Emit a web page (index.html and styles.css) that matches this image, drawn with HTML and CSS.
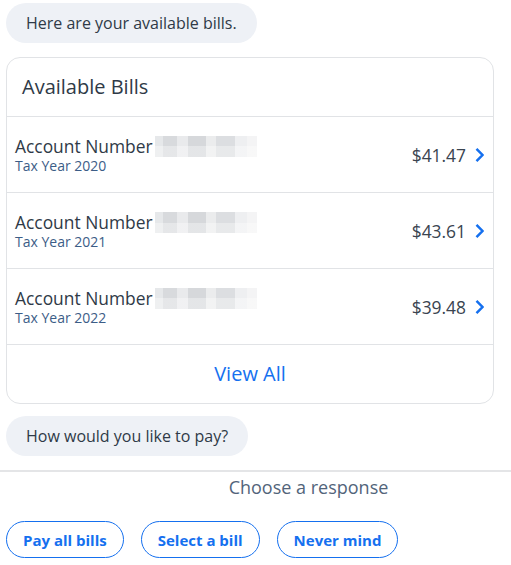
FILE: index.html
```html
<!DOCTYPE html>
<html lang="en">
<head>
    <meta charset="UTF-8">
    <meta name="viewport" content="width=device-width, initial-scale=1.0">
    <title>Available Bills</title>
    <link rel="stylesheet" href="styles.css">
</head>
<body>

    <div class="chat">
        <!-- Bot message -->
        <div class="bubble">Here are your available bills.</div>

        <!-- Bills card -->
        <div class="card">
            <div class="card-title">Available Bills</div>

            <div class="bill-row">
                <div class="bill-info">
                    <div class="account">Account Number <span class="blurred"></span></div>
                    <div class="tax-year">Tax Year 2020</div>
                </div>
                <div class="amount">$41.47</div>
                <svg class="chevron" width="11" height="16" viewBox="0 0 11 16"><path d="M2.5 1.8 L8.5 8 L2.5 14.2" fill="none" stroke="#1570ef" stroke-width="2.5"/></svg>
            </div>

            <div class="bill-row">
                <div class="bill-info">
                    <div class="account">Account Number <span class="blurred"></span></div>
                    <div class="tax-year">Tax Year 2021</div>
                </div>
                <div class="amount">$43.61</div>
                <svg class="chevron" width="11" height="16" viewBox="0 0 11 16"><path d="M2.5 1.8 L8.5 8 L2.5 14.2" fill="none" stroke="#1570ef" stroke-width="2.5"/></svg>
            </div>

            <div class="bill-row">
                <div class="bill-info">
                    <div class="account">Account Number <span class="blurred"></span></div>
                    <div class="tax-year">Tax Year 2022</div>
                </div>
                <div class="amount">$39.48</div>
                <svg class="chevron" width="11" height="16" viewBox="0 0 11 16"><path d="M2.5 1.8 L8.5 8 L2.5 14.2" fill="none" stroke="#1570ef" stroke-width="2.5"/></svg>
            </div>

            <div class="view-all">View All</div>
        </div>

        <div class="bubble">How would you like to pay?</div>
    </div>

    <!-- Quick replies -->
    <div class="responses">
        <div class="responses-label">Choose a response</div>
        <div class="response-buttons">
            <button class="response">Pay all bills</button>
            <button class="response">Select a bill</button>
            <button class="response">Never mind</button>
        </div>
    </div>

</body>
</html>
```

FILE: styles.css
```css
body, html {
    margin: 0;
    padding: 0;
    background: #fff;
    font-family: "Open Sans", "Noto Sans", sans-serif;
    color: #2f3a47;
}

.chat {
    padding: 3px 17px 0 6px;
    display: flex;
    flex-direction: column;
    align-items: flex-start;
}

.bubble {
    background-color: #eef1f6;
    border-radius: 20px;
    padding: 0 20px;
    height: 40px;
    line-height: 40px;
    font-size: 16px;
}

/* Bills card */
.card {
    align-self: stretch;
    margin: 14px 0 12px;
    border: 1px solid #e1e3e6;
    border-radius: 14px;
    overflow: hidden;
}

.card-title {
    height: 58px;
    line-height: 57px;
    padding-left: 15px;
    font-size: 20px;
    border-bottom: 1px solid #e1e3e6;
}

.bill-row {
    height: 75px;
    display: flex;
    align-items: center;
    padding: 0 8px 0 8px;
    border-bottom: 1px solid #e1e3e6;
}

.bill-info {
    flex: 1;
}

.account {
    font-size: 17.4px;
    line-height: 22px;
    display: flex;
    align-items: center;
}

.blurred {
    display: inline-block;
    width: 102px;
    height: 21px;
    margin-left: 2px;
    margin-top: 2px;
    background:
        linear-gradient(180deg, rgba(255, 255, 255, 0) 0 50%, rgba(255, 255, 255, 0.35) 50% 100%),
        linear-gradient(90deg, #e6e8ea 0 8%, #d8dadd 8% 22%, #e9eaec 22% 32%, #d6d8db 32% 50%, #ebeced 50% 60%, #dcdee1 60% 78%, #eeeff1 78% 90%, #f4f4f5 90% 100%);
}

.tax-year {
    font-size: 14px;
    line-height: 18px;
    color: #3c5d87;
}

.amount {
    font-size: 17.4px;
    color: #3a4450;
    margin-right: 8px;
}

.chevron {
    display: block;
}

.view-all {
    height: 58px;
    line-height: 58px;
    text-align: center;
    font-size: 20px;
    color: #1570ef;
}

/* Quick replies */
.responses {
    margin-top: 14px;
    border-top: 2px solid #e4e5e7;
}

.responses-label {
    padding-left: 106px;
    text-align: center;
    font-size: 18px;
    line-height: 31px;
    color: #52647a;
}

.response-buttons {
    display: flex;
    gap: 17px;
    padding: 18px 6px 0;
}

.response {
    font-family: "Open Sans", "Noto Sans", sans-serif;
    font-size: 15px;
    font-weight: bold;
    color: #1570ef;
    background: #fff;
    border: 1.3px solid #1570ef;
    border-radius: 19px;
    height: 37px;
    padding: 0 16px;
}
```
